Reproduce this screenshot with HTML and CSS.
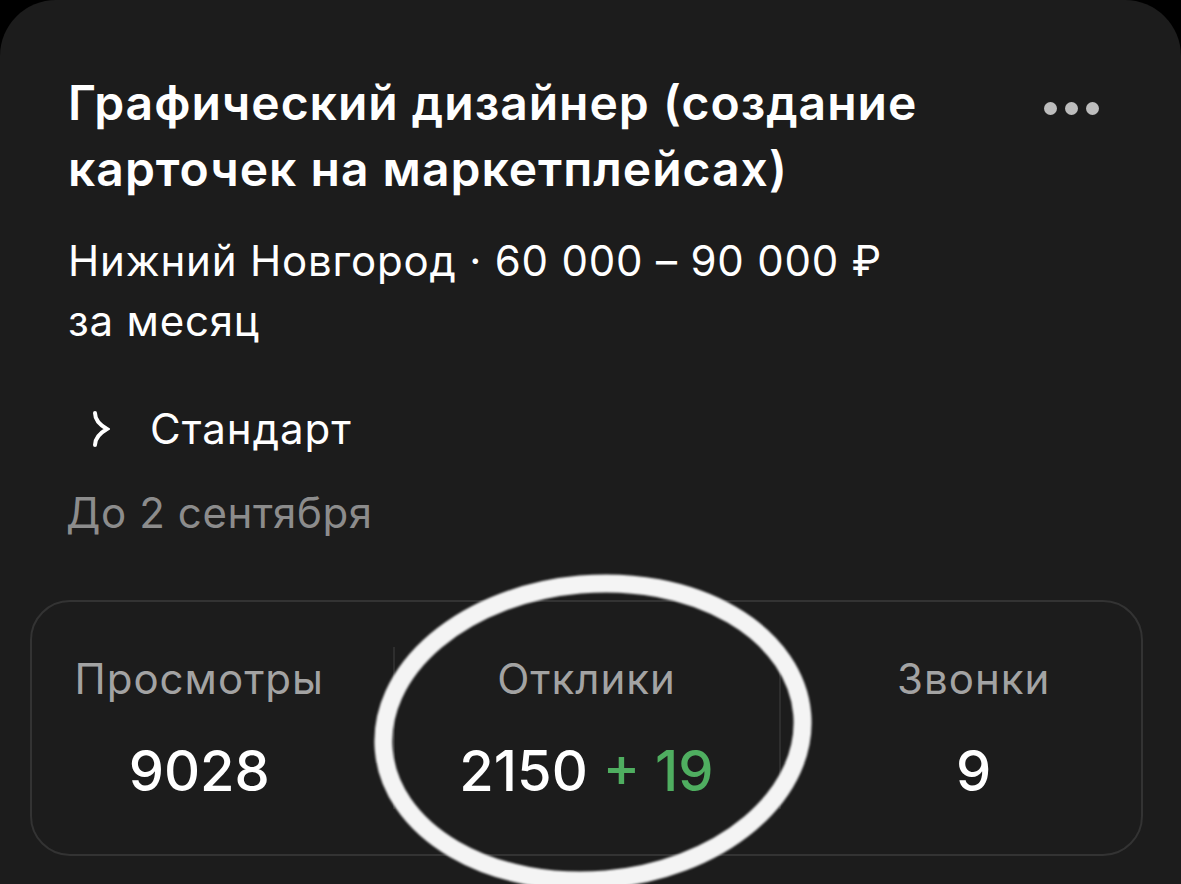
FILE: index.html
```html
<!DOCTYPE html>
<html>
  <head>
    <title>Вакансия</title>
    <link rel="stylesheet" href="styles.css">
  </head>
  <body>
    <div class="card">
      <div class="card-head">
        <h1 class="title">Графический дизайнер (создание карточек на маркетплейсах)</h1>
        <button class="more" title="Ещё"><span></span><span></span><span></span></button>
      </div>
      <p class="meta">Нижний Новгород · 60 000 – 90 000 ₽ за месяц</p>
      <div class="tariff">
        <svg class="tariff-icon" width="18" height="36" viewBox="0 0 18 36">
          <path d="M3 2 C3 9 8 14 15 18 C8 22 3 27 3 34" fill="none" stroke="#fff" stroke-width="4" stroke-linecap="round"/>
        </svg>
        <span>Стандарт</span>
      </div>
      <p class="deadline">До 2 сентября</p>
      <div class="stats">
        <div class="stat stat-left">
          <span class="stat-label">Просмотры</span>
          <span class="stat-value">9028</span>
        </div>
        <div class="stat stat-mid">
          <span class="stat-label">Отклики</span>
          <span class="stat-value">2150 <span class="stat-new">+ 19</span></span>
        </div>
        <div class="stat stat-right">
          <span class="stat-label">Звонки</span>
          <span class="stat-value">9</span>
        </div>
      </div>
      <svg class="mark" width="470" height="330" viewBox="0 0 470 330">
        <ellipse cx="235" cy="160" rx="210" ry="148" fill="none" stroke="#f4f4f4" stroke-width="18" transform="rotate(-5 235 160)"/>
      </svg>
    </div>
  </body>
</html>
```

FILE: styles.css
```css
body {
  margin: 0;
  background-color: #000;
  font-family: Inter, "Noto Sans", sans-serif;
  color: #fff;
  overflow: hidden;
}

.card {
  position: relative;
  height: 960px;
  background-color: #1c1c1c;
  border-radius: 56px 56px 0 0;
  padding: 70px 38px 0 30px;
}

.card-head {
  display: flex;
  justify-content: space-between;
  align-items: flex-start;
  padding-left: 38px;
}

.title {
  margin: 0;
  max-width: 900px;
  font-size: 48px;
  font-weight: 600;
  line-height: 66px;
  letter-spacing: 1px;
}

.more {
  display: flex;
  gap: 8px;
  margin: 32px 44px 0 0;
  padding: 0;
  background: transparent;
  border: 0;
}

.more span {
  width: 13px;
  height: 13px;
  border-radius: 50%;
  background-color: #bdbdbd;
}

.meta {
  margin: 29px 0 0 38px;
  max-width: 870px;
  font-size: 42px;
  line-height: 60px;
  letter-spacing: 0.8px;
}

.tariff {
  display: flex;
  align-items: center;
  gap: 40px;
  margin: 53px 0 0 62px;
  font-size: 42px;
  line-height: 50px;
  letter-spacing: 1px;
}

.deadline {
  margin: 34px 0 0 36px;
  font-size: 42px;
  line-height: 50px;
  letter-spacing: 0.6px;
  color: #8c8c8c;
}

.stats {
  display: grid;
  grid-template-columns: 1fr 388px 1fr;
  align-items: center;
  height: 256px;
  margin-top: 62px;
  border: 2px solid #333;
  border-radius: 40px;
  box-sizing: border-box;
}

.stat {
  display: flex;
  flex-direction: column;
  align-items: center;
  gap: 38px;
}

.stat-left {
  padding-right: 26px;
}

.stat-right {
  padding-left: 26px;
}

.stat-mid {
  height: 162px;
  justify-content: center;
  border-left: 2px solid #2e2e2e;
  border-right: 2px solid #2e2e2e;
}

.stat-label {
  font-size: 42px;
  line-height: 48px;
  letter-spacing: 1px;
  color: #a3a3a3;
}

.stat-value {
  font-size: 56px;
  line-height: 60px;
  font-weight: 500;
}

.stat-new {
  color: #4fae60;
}

.mark {
  position: absolute;
  left: 358px;
  top: 572px;
  filter: blur(1px);
}
```
